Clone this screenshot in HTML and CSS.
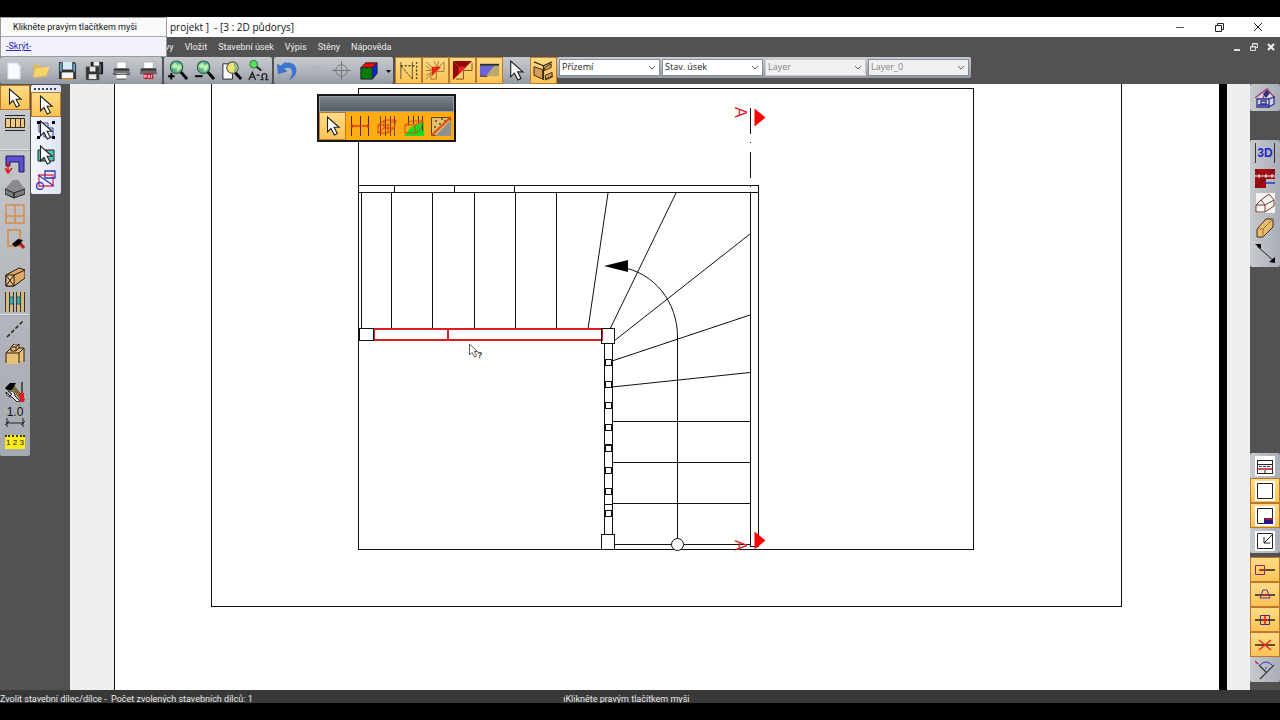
FILE: index.html
```html
<!DOCTYPE html>
<html lang="cs">
<head>
<meta charset="utf-8">
<title>projekt - 2D půdorys</title>
<link rel="stylesheet" href="styles.css">
</head>
<body>
<svg class="defs" aria-hidden="true">
  <symbol id="cursor" viewBox="0 0 20 20"><path d="M4.500 1v15l3.500-3.500 3.300 6.500 3-1.500-3.200-6.200h5z" fill="#fff" stroke="#222" stroke-width="1.100"/></symbol>
  <symbol id="globe" viewBox="0 0 22 22"><path d="M14 12l7 8" stroke="#000" stroke-width="3"/><circle cx="10" cy="7.500" r="6.500" fill="#68c58d" stroke="#31594c" stroke-width="1.200"/><path d="M5 6l4-3 2 3 3-2 1 4-4 4-1-4-3 1z" fill="#c0efb0"/><path d="M6 9l3 4M10 2l3 2" stroke="#3a8aa0"/></symbol>
</svg>
<div class="app">
  <header class="titlebar">
    <span class="title">projekt ]&nbsp; - [3 : 2D půdorys]</span>
    <div class="winbtns">
      <button aria-label="Minimalizovat"><svg viewBox="0 0 10 10"><path d="M1 5.500h8" stroke="#555"/></svg></button>
      <button aria-label="Obnovit"><svg viewBox="0 0 10 10"><path d="M1.500 3.500h6v6h-6zM3.500 3.500v-2h6v6h-2" fill="none" stroke="#222"/></svg></button>
      <button aria-label="Zavřít"><svg viewBox="0 0 10 10"><path d="M1 1l8 8M9 1L1 9" stroke="#222"/></svg></button>
    </div>
  </header>
  <nav class="menubar">
    <button>vy</button><button>Vložit</button><button>Stavební úsek</button><button>Výpis</button><button>Stěny</button><button>Nápověda</button>
    <div class="docbtns">
      <button aria-label="Minimalizovat okno"><svg viewBox="0 0 10 10"><path d="M2 8h6" stroke="#ddd" stroke-width="2"/></svg></button>
      <button aria-label="Obnovit okno"><svg viewBox="0 0 10 10"><path d="M1.500 4.500h5v4h-5zM3.500 4V1.500h5v4H7M1 5h6M3 2h6" fill="none" stroke="#ddd"/></svg></button>
      <button aria-label="Zavřít okno"><svg viewBox="0 0 10 10"><path d="M2 2l6 6M8 2L2 8" stroke="#eee" stroke-width="2"/></svg></button>
    </div>
  </nav>
  <div class="toolbar">
    <div class="group">
      <button aria-label="Nový"><svg viewBox="0 0 22 22"><path d="M5 3h10l3 3v14H5z" fill="#f8fbff" stroke="#cbd4e0"/><path d="M15 3v3h3" fill="#ddd"/></svg></button>
      <button aria-label="Otevřít"><svg viewBox="0 0 22 22"><path d="M3 5h6l2 2h7v10l-13 2z" fill="#d9bb5c"/><path d="M3 18l3-9 15-2-4 9z" fill="#f6d36b"/></svg></button>
      <button aria-label="Uložit"><svg viewBox="0 0 22 22"><path d="M2 2h16l2 2v16H2z" fill="#333"/><path d="M6 2h10v8H6z" fill="#d5eaf5"/><path d="M5 13h12v6H5z" fill="#f7f7f7"/><path d="M4 3v9M18 4v8" stroke="#5da4d0" stroke-width="2"/><path d="M5 20h12" stroke="#d09050" stroke-width="2"/></svg></button>
      <button aria-label="Uložit vše"><svg viewBox="0 0 22 22"><path d="M7 2h13v13H7z" fill="#222"/><path d="M10 2h6v4h-6z" fill="#eee"/><path d="M2 7h14v14H2z" fill="#333" stroke="#888" stroke-width=".6"/><path d="M6 7h6v5H6zM5 15h8v5H5z" fill="#e8e8e8"/><path d="M17 4v9" stroke="#789"/></svg></button>
      <button aria-label="Tisk"><svg viewBox="0 0 22 22"><path d="M6 2h10v7H6z" fill="#fff" stroke="#aaa"/><path d="M3 9h16l1 6H2z" fill="#777"/><path d="M3 10h16" stroke="#333" stroke-width="2"/><path d="M6 14h10v6H6z" fill="#fff"/><path d="M2 15h18M6 20h10" stroke="#444"/></svg></button>
      <button aria-label="Tisk do PDF"><svg viewBox="0 0 22 22"><path d="M6 2h10v7H6z" fill="#fff" stroke="#aaa"/><path d="M3 9h16l1 6H2z" fill="#666"/><path d="M3 10h16" stroke="#333" stroke-width="2"/><path d="M6 14h10v6H6z" fill="#c6192c"/><path d="M7 19v-3h2v1.500H7M11 19v-3h1v3M14 19v-3h1" fill="none" stroke="#fff" stroke-width=".7"/></svg></button>
    </div>
    <div class="group">
      <button aria-label="Přiblížit"><svg viewBox="0 0 22 22"><use href="#globe"/><path d="M1 17h7M4.500 13.500v7" stroke="#000" stroke-width="2"/></svg></button>
      <button aria-label="Oddálit"><svg viewBox="0 0 22 22"><use href="#globe"/><path d="M1 17h8" stroke="#000" stroke-width="2"/></svg></button>
      <button aria-label="Zobrazit stránku"><svg viewBox="0 0 22 22"><path d="M2 4h10v16H2z" fill="#fff" stroke="#222"/><path d="M14 12l7 8" stroke="#000" stroke-width="3"/><circle cx="12" cy="8" r="6" fill="#f0e46c" stroke="#555" stroke-width="1.200"/><path d="M14 4q3 4 0 8" fill="none" stroke="#65bda6" stroke-width="2"/></svg></button>
      <button aria-label="Hledat text"><svg viewBox="0 0 22 22"><circle cx="6" cy="4.500" r="4" fill="#55e35f" stroke="#287b36"/><path d="M9 7l5 4" stroke="#222" stroke-width="2"/><path d="M1 21l3.500-8L8 21M2 18h5M9 16h3M13 20.500h2.500v-1c-4-7 7-7 3.500 0v1h2.500" fill="none" stroke="#222" stroke-width="1.400"/></svg></button>
    </div>
    <div class="group">
      <button aria-label="Zpět"><svg viewBox="0 0 22 22"><path d="M0 4l1 11 10-3-3.500-3c9-4 11 5 5 12 12-5 10-21-5-18L4 6z" fill="#3974cf"/></svg></button>
      <button aria-label="Znovu" disabled><svg viewBox="0 0 22 22"><path d="M4 14q4-9 10-5V6l4 5-4 4v-3q-5-3-8 4z" fill="none" stroke="#a9acb4"/></svg></button>
      <button aria-label="Střed"><svg viewBox="0 0 22 22"><circle cx="11" cy="11" r="6" fill="none" stroke="#777"/><path d="M11 1v20M1 11h20" stroke="#777"/></svg></button>
      <button aria-label="3D pohled"><svg viewBox="0 0 22 22"><path d="M3 8l5-5h12l-5 5z" fill="#f00"/><path d="M3 8h12v12H3z" fill="#087b0a"/><path d="M15 8l5-5v11l-5 6z" fill="#0028dc"/><path d="M3 8l5-5h12v11l-5 6H3zM3 8h12v12M15 8l5-5" fill="none" stroke="#222"/></svg></button>
      <button class="caret" aria-label="Další pohledy"><svg viewBox="0 0 6 6"><path d="M1 2h5L3.500 5z"/></svg></button>
    </div>
    <div class="group">
      <button class="on" aria-label="Čáry"><svg viewBox="0 0 22 22"><path d="M3 2v18M15 2v18" stroke="#553" /><path d="M19.500 2v18M3 6h16" stroke="#443" stroke-width="1.500" stroke-dasharray="2 2"/><path d="M3 6l12 14" stroke="#443" stroke-dasharray="3 1"/></svg></button>
      <button class="on" aria-label="Šrafy"><svg viewBox="0 0 22 22"><path d="M1 2l8 7M1 6l6 5M1 11h6M1 16l6-3M9 1l4 7M14 1l-1 6M1 20L20 2M20 2v10h-8v8H6v-5" fill="none" stroke="#a07a3a"/><path d="M7 7h10L7 17z" fill="#e52617"/></svg></button>
      <button class="on" aria-label="Střecha"><svg viewBox="0 0 22 22"><path d="M1 1h20L1 21z" fill="#920a0a"/><path d="M7 7h8l-8 8z" fill="#f32020"/><path d="M1 1l6 6M21 3v8h-9v9H4" fill="none" stroke="#7a4d24"/></svg></button>
      <button class="on" aria-label="Plocha"><svg viewBox="0 0 22 22"><path d="M1 5h20v12H1z" fill="#b8a870"/><path d="M1 6h15L7 17H1z" fill="#6b65d8"/><path d="M1 5h20" stroke="#233" stroke-width="2"/><path d="M1 17h8" stroke="#233"/></svg></button>
      <button aria-label="Výběr"><svg><use href="#cursor"/></svg></button>
      <button class="on" aria-label="Prvky"><svg viewBox="0 0 22 22"><path d="M1 7l9 3v10l-9-4z" fill="#d49c59" stroke="#382b18"/><path d="M1 2l10 4 9-4M11 6v15M13 21l8-4" fill="none" stroke="#382b18" stroke-width="1.300"/><path d="M12 8l7-4v4l-7 3zM13 16l7-3v4l-7 3z" fill="#d49c59" stroke="#382b18"/></svg></button>
    </div>
    <div class="selects">
      <select aria-label="Podlaží"><option>Přízemí</option></select>
      <select aria-label="Úsek"><option>Stav. úsek</option></select>
      <select aria-label="Layer" class="off" disabled><option>Layer</option></select>
      <select aria-label="Číslo layeru" class="off framed" disabled><option>Layer_0</option></select>
    </div>
  </div>
  <main class="work">
    <aside class="leftdock">
      <div class="palette">
        <button class="on" aria-label="Zvolit"><svg><use href="#cursor"/></svg></button>
        <button class="end" aria-label="Schody"><svg viewBox="0 0 20 20"><path d="M0 5h20v10H0z" fill="#efc984"/><path d="M0 2.500h20M0 17.500h20" stroke="#222"/><path d="M.500 5.500h19v9H.5zM5.500 5v10M10.500 5v10M15.500 5v10" fill="none" stroke="#3b2b12"/></svg></button>
        <hr>
        <button aria-label="Stěna"><svg viewBox="0 0 20 20"><path d="M1 2h18v16h-5V8H5v4H1z" fill="#5950d2" stroke="#211b55"/><path d="M3 8v10M0 14l3 5 4-5" fill="none" stroke="#e0161b" stroke-width="1.500"/></svg></button>
        <button aria-label="Strop"><svg viewBox="0 0 20 20"><path d="M0 10l8-9h5l7 9-11 4z" fill="#8b8b8b"/><path d="M0 10l9 4v5l-9-4zM9 14l11-4v5L9 19z" fill="#7c7c7c" stroke="#222"/></svg></button>
        <button aria-label="Okno"><svg viewBox="0 0 20 20"><path d="M1 1h18v18H1zM10 1v18M1 12h18" fill="none" stroke="#dc8b45" stroke-width="1.500"/></svg></button>
        <button aria-label="Upravit okno" class="pad"><svg viewBox="0 0 20 20"><path d="M3 1h12v16H3z" fill="none" stroke="#df873b" stroke-width="1.500"/><path d="M14 13l5 6" stroke="#b81c22" stroke-width="3"/><path d="M7 15l6-5 5 1-4 5-4 2z"/></svg></button>
        <button aria-label="Trám"><svg viewBox="0 0 20 20"><path d="M1 8l13-7 6 2v8L9 19H1z" fill="#dda866" stroke="#27180b"/><path d="M1 8h8v11H1z" fill="#edc385" stroke="#27180b"/><path d="M1 8l8 11M9 8L1 19M9 8l11-5" fill="none" stroke="#27180b"/></svg></button>
        <button aria-label="Sloupky"><svg viewBox="0 0 20 20"><path d="M2 0v20M7 0v20M13 0v20M18 0v20" stroke="#e0b872" stroke-width="3"/><path d="M.500 0v20M4.500 0v20M8.500 0v20M11.500 0v20M15.500 0v20M19.500 0v20" stroke="#333"/><path d="M5 5h3v7H5zM12 5h3v7h-3z" fill="#37c4ae" stroke="#366"/></svg></button>
        <hr>
        <button aria-label="Linie"><svg viewBox="0 0 20 20"><path d="M2 18L18 2" stroke="#222" stroke-width="1.500" stroke-dasharray="4 2"/></svg></button>
        <button aria-label="Sloup" class="pad"><svg viewBox="0 0 20 20"><path d="M1 9l5-5h13v15M1 19V9h13l5-5M14 9v10" fill="#e9c078"/><path d="M1 9h13v11H1z" fill="#e9c078"/><path d="M1 19V9l5-5h13v14M1 9h13l5-5M14 9v10" fill="none" stroke="#2c2115"/><path d="M6 3l3-3h5v4l-3 3H6zM6 3h5l3-3M11 3v4" fill="#e5b873" stroke="#2c2115"/></svg></button>
        <button aria-label="Nástroje"><svg viewBox="0 0 20 20"><path d="M8 5l11 14" stroke="#786d26" stroke-width="4"/><path d="M0 6l5-5h6l-4 7H2z"/><path d="M17 0v12" stroke="#333" stroke-width="1.500"/><path d="M14 11h5v9h-4z" fill="#e51c22"/><path d="M1 10l4 4 2-2-4-3q7-1 7 5l5 5-3 1-5-5q-6 0-6-5" fill="#e1e1e1" stroke="#222"/></svg></button>
        <button aria-label="Kóta" class="dim"><span>1.0</span><svg viewBox="0 0 20 9"><path d="M1 5h18M2 0v9M18 0v9M0 7l4-4M16 7l4-4" stroke="#222"/></svg></button>
        <button aria-label="Měření" class="ruler"><span>1 2 3</span></button>
      </div>
      <div class="palette sub">
        <i class="grip"></i>
        <button class="on" aria-label="Ukazatel"><svg><use href="#cursor"/></svg></button>
        <button aria-label="Výběr rámem"><svg viewBox="0 0 20 20"><path d="M3 3h9v9H3zM8 8h9v9H8z" fill="none" stroke="#37379a"/><path d="M1 1h3v3H1zM16 1h3v3h-3zM1 16h3v3H1zM16 16h3v3h-3z"/><use href="#cursor"/></svg></button>
        <button aria-label="Výběr plochy"><svg viewBox="0 0 20 20"><path d="M2 5h16v11H2z" fill="#4fc4b0" stroke="#222"/><use href="#cursor"/></svg></button>
        <button aria-label="Výběr tvarů"><svg viewBox="0 0 20 20"><path d="M3 5h14v11H3z" fill="none" stroke="#ed3449" stroke-width="1.300"/><path d="M9 1h10v7H9zM2 5l16 11" fill="none" stroke="#3434bd" stroke-width="1.300"/><circle cx="4" cy="16" r="3.500" fill="none" stroke="#3434bd" stroke-width="1.300"/></svg></button>
      </div>
    </aside>
    <section class="canvas">
      <svg viewBox="70 84 1180 606" role="img" aria-label="Půdorys schodiště">
        <rect x="70" y="84" width="1180" height="606" fill="#efefef"/>
        <rect x="115" y="84" width="1104" height="606" fill="#fff"/>
        <rect x="1219" y="84" width="8" height="606"/>
        <g fill="none" stroke="#111" shape-rendering="crispEdges">
          <path d="M114.500 84v606M211.500 84v522.500h910V84M358.500 88.500h615v461h-615z"/>
          <path d="M358.500 185.500h400v361h-8V192.500h-392zM394.500 185v8M454.500 185v8M514.500 185v8M750.500 192.500h8"/>
          <path d="M361.500 193v136M391.500 193v136M432.500 193v136M474.500 193v136M515.500 193v136M556.500 193v136"/>
          <path d="M612 421.500h138M612 462.500h138M612 503.500h138M615 544.500h135"/>
          <path d="M604.500 343v192M612.500 343v192M605 444.500h7M605 504.500h7"/>
          <path d="M750.500 108v26M750.500 142v1M750.500 152v26M750.500 186v1"/>
          <path d="M605.500 359.500h6v6h-6zM605.500 381.500h6v6h-6zM605.500 402.500h6v6h-6zM605.500 424.500h6v6h-6zM605.500 445.500h6v6h-6zM605.500 467.500h6v6h-6zM605.500 488.500h6v6h-6zM605.500 510.500h6v6h-6z"/>
        </g>
        <g fill="none" stroke="#111">
          <path d="M608 193L588 329M676 193L610 329M750 234L614 341M750 315L612 361M750 372.500L612 387M677.500 539V338C678 302 654 272 620 267"/>
          <circle cx="677.500" cy="544.500" r="6" fill="#fff"/>
        </g>
        <path d="M604 266l24-6v12z"/>
        <path d="M374 329h228v11h-228zM448 329v12" fill="none" stroke="#dc1b25" stroke-width="2" shape-rendering="crispEdges"/>
        <path d="M359.500 328.500h14v12h-14zM601.500 328.500h13v15h-13zM601.500 534.500h13v15h-13z" fill="#fff" stroke="#111" shape-rendering="crispEdges"/>
        <path d="M602 329v12" stroke="#dc1b25" stroke-width="1" shape-rendering="crispEdges"/>
        <path d="M754.500 108.500l11 9-11 9zM754.500 531.500l11 9-11 9z" fill="#f00"/>
        <text class="mark" transform="translate(735 107) rotate(90)">A</text>
        <text class="mark" transform="translate(735 540) rotate(90)">A</text>
        <path d="M469.500 344v11l2.500-2.500 2.500 4.500 2-1-2-4.500h3z" fill="#fff" stroke="#333" stroke-width=".8"/>
        <text class="help" x="477" y="358">?</text>
      </svg>
      <div class="floating">
        <div class="floathead"></div>
        <div class="floatrow">
          <button class="on" aria-label="Zvolit dílec"><svg><use href="#cursor"/></svg></button>
          <button aria-label="Rozteč"><svg viewBox="0 0 20 20"><path d="M1.500 0v20M10.500 0v20M18.500 0v20" stroke="#44300f"/><path d="M1 10h18" stroke="#e13a14" stroke-width="1.500"/><path d="M0 10l3-2v4zM20 10l-3-2v4z" fill="#e13a14"/></svg></button>
          <button aria-label="Kvádr"><svg viewBox="0 0 20 20"><path d="M3.500 0v20M8.500 0v20M13.500 0v20M17.500 0v20" stroke="#634711"/><path d="M1 9l7-5h11l-2 8-6 5H1zM1 9h10l8-5M11 9v8M7 4v8l-6 5M7 12h10" fill="none" stroke="#e13a14"/></svg></button>
          <button aria-label="Výplň"><svg viewBox="0 0 20 20"><path d="M0 20l7-9 13-5v14z" fill="#18dc23"/><path d="M4.500 0v9M9.500 0v8M14.500 0v7M18.500 0v15" stroke="#443a10"/><path d="M1 9l6-4h12l-2 8-5 4H1zM1 9h10l8-4M11 9v8" fill="none" stroke="#d34b14"/></svg></button>
          <button aria-label="Materiál"><svg viewBox="0 0 20 20"><path d="M.500 1.500h19v18H.5z" fill="#e2bd6d" stroke="#57421b"/><path d="M20 4v16H4z" fill="#8e9190"/><path d="M4 5h2M10 3h2M8 8h2M3 11h2M13 5h2" stroke="#6a4712" stroke-width="1.500"/><path d="M0 20L20 1" stroke="#de4e13" stroke-width="2"/></svg></button>
        </div>
      </div>
    </section>
    <aside class="rightdock">
      <div class="palette">
        <button aria-label="Model domu"><svg viewBox="0 0 20 20"><path d="M1 10L12 1l8 9v6l-5 3H3v-8" fill="#d8d3e4"/><path d="M0 10L12 1l8 9M12 1L8 10" fill="none" stroke="#a63768" stroke-width="1.300"/><path d="M8 6l4-4 3 3-4 5z" fill="#35307c"/><path d="M2 11h12v8H2zM14 11l5-2v7l-5 3M6 13h5v3H6zM3 17h11" fill="none" stroke="#29318c" stroke-width="1.300"/></svg></button>
      </div>
      <div class="palette views">
        <button aria-label="3D" class="threed"><span>3D</span></button>
        <button aria-label="Řez střechou"><svg viewBox="0 0 20 20"><path d="M0 1h20v10H11v9H0z" fill="#a10d13"/><path d="M0 1l10 10L20 1M0 20l10-9" fill="none" stroke="#5c0808"/><path d="M0 8h20M4 6v4M11 6v4M17 6v4" stroke="#fff"/><path d="M10 15h10" stroke="#2836c9" stroke-width="1.500"/></svg></button>
        <button aria-label="Dům"><svg viewBox="0 0 20 20"><path d="M1 0h19v20H1z" fill="#f6f4f2"/><path d="M1 12l5-5 4 5v7H1zM6 7l8-6 5 6-9 5M19 7v6l-9 6M1 12h9" fill="none" stroke="#763b31"/></svg></button>
        <button aria-label="Deska"><svg viewBox="0 0 20 20"><path d="M2 11L11 1h7v8L8 19H2z" fill="#e9bd70" stroke="#3d2d17"/><path d="M2 11h6L18 1M8 11v8" fill="none" stroke="#9d7431"/></svg></button>
        <button aria-label="Úsečka"><svg viewBox="0 0 20 20"><path d="M2 3l17 15" stroke="#222"/><path d="M0 1h6v5zM20 20v-6l-6 5z"/></svg></button>
      </div>
      <div class="palette layouts">
        <button aria-label="Rozpis"><svg viewBox="0 0 20 20"><path d="M0 0h20v20H0z" fill="#fff"/><path d="M2 4.500h16M2 8.500h16M2 17.500h16M2.500 4v14M17.500 4v14M10 14v4" stroke="#222"/><path d="M2 13h16" stroke="#b41824" stroke-width="1.500"/><path d="M4 10.500h12" stroke="#2836a0" stroke-dasharray="3 1"/></svg></button>
        <button class="on" aria-label="List"><svg viewBox="0 0 20 20"><path d="M0 0h20v20H0z" fill="#fff"/><path d="M2.500 2.500h15v15h-15z" fill="none" stroke="#222"/></svg></button>
        <button class="on" aria-label="Razítko"><svg viewBox="0 0 20 20"><path d="M0 0h20v20H0z" fill="#fff"/><path d="M2.500 2.500h15v15h-15z" fill="none" stroke="#222"/><path d="M9 12h9v6H9z" fill="#261784"/><path d="M10 12h8v2h-8z" fill="#a4163d"/></svg></button>
        <button aria-label="Přizpůsobit"><svg viewBox="0 0 20 20"><path d="M0 0h20v20H0z" fill="#fff"/><path d="M2.500 2.500h15v15h-15zM17 4l-8 8M9 6v6h6" fill="none" stroke="#222"/></svg></button>
      </div>
      <div class="palette snaps">
        <button class="on" aria-label="Koncový bod"><svg viewBox="0 0 20 20"><path d="M5 10h15" stroke="#222" stroke-width="1.500"/><path d="M.500 5.500h9v9H.5z" fill="none" stroke="#772e6f"/><path d="M4 10h6" stroke="#db281c" stroke-width="1.500"/></svg></button>
        <button class="on" aria-label="Střed úsečky"><svg viewBox="0 0 20 20"><path d="M0 10h20" stroke="#222" stroke-width="1.500"/><path d="M5 13l3-8h4l3 8z" fill="none" stroke="#54379a"/><path d="M7 10h6" stroke="#db281c" stroke-width="1.500"/></svg></button>
        <button class="on" aria-label="Průsečík"><svg viewBox="0 0 20 20"><path d="M0 10h20" stroke="#222" stroke-width="1.500"/><path d="M5.500 5.500h9v9h-9z" fill="none" stroke="#442d76"/><path d="M10 6v8M7 10h6" stroke="#e51d18" stroke-width="1.500"/></svg></button>
        <button class="on" aria-label="Bod na čáře"><svg viewBox="0 0 20 20"><path d="M0 10h20" stroke="#222" stroke-width="1.500"/><path d="M4 5l12 10M16 5L4 15" stroke="#e52a18" stroke-width="1.500"/></svg></button>
        <button aria-label="Kolmice"><svg viewBox="0 0 20 20"><path d="M5 19L19 5M4 5l7 7" stroke="#333" stroke-width="1.200"/><path d="M0 1l3 3" stroke="#bd2939" stroke-width="1.500"/><path d="M5 5q6-6 12 0" fill="none" stroke="#3337ce"/><path d="M11 7v2" stroke="#3337ce"/></svg></button>
      </div>
    </aside>
  </main>
  <footer class="status">
    <span class="state">Zvolit stavební dílec/dílce -&nbsp; Počet zvolených stavebních dílců: 1</span>
    <span>ıKlikněte pravým tlačítkem myši</span>
  </footer>
  <div class="hint">
    <p>Klikněte pravým tlačítkem myši</p>
    <div><a href="#">-Skrýt-</a></div>
  </div>
</div>
</body>
</html>
```
FILE: styles.css
```css
* { box-sizing: border-box; }
body {
  margin: 0;
  background: #000;
  font: 9px/12px Roboto, sans-serif;
  color: #111;
}
button { border: 0; padding: 0; background: none; font: inherit; color: inherit; }
svg { display: block; }
.defs { position: absolute; width: 0; height: 0; }
.app {
  position: relative;
  display: flex;
  flex-direction: column;
  min-height: 100vh;
  padding: 17px 0;
}
.titlebar {
  display: flex;
  justify-content: space-between;
  align-items: center;
  height: 20px;
  padding: 0 17px 0 170px;
  background: #fff;
}
.title { font: 10px/16px "Open Sans", sans-serif; white-space: nowrap; }
.winbtns { display: flex; gap: 29px; }
.winbtns svg, .docbtns svg { width: 10px; height: 10px; }
.menubar {
  display: flex;
  align-items: center;
  gap: 11px;
  height: 20px;
  padding: 0 4px 0 165px;
  background: #525252;
  color: #ececec;
}
.docbtns { display: flex; gap: 7px; margin-left: auto; }
.toolbar {
  display: flex;
  gap: 2px;
  height: 27px;
  background: #525252;
}
.group {
  display: flex;
  border-radius: 2px;
  background: linear-gradient(#c6c9cf, #aeb2ba 60%, #9298a2);
}
.group button {
  display: grid;
  place-items: center;
  width: 27px;
  height: 27px;
}
.group svg { width: 21px; height: 21px; }
.group .caret { width: 11px; }
.group .caret svg { width: 6px; height: 6px; }
.group .on, .palette .on, .floatrow .on {
  border: 1px solid #bd782e;
  background: linear-gradient(#ffdc86, #fcc355);
}
.selects {
  display: flex;
  gap: 2px;
  height: 21px;
  margin-left: -2px;
  padding: 2px;
  border-radius: 2px;
  background: linear-gradient(#c9ccd2, #9499a3);
}
.selects select {
  appearance: none;
  width: 101px;
  height: 17px;
  padding: 0 16px 1px 2px;
  border: 1px solid #83919b;
  border-radius: 0;
  font: 9px/12px "Open Sans", sans-serif;
  color: #222;
  background: #fff url("data:image/svg+xml,%3Csvg xmlns='http://www.w3.org/2000/svg' width='8' height='6'%3E%3Cpath d='M1 1l3 3 3-3' fill='none' stroke='%23666'/%3E%3C/svg%3E") no-repeat right 3px center;
  opacity: 1;
}
.selects .off { color: #858585; border-color: #c9c9c9; background-color: #f0f0f0; }
.selects .framed { border-color: #81909a; }
.work { display: flex; flex: 1; background: #525252; }
.leftdock { display: flex; gap: 1px; align-items: flex-start; width: 70px; padding-top: 1px; }
.palette {
  display: flex;
  flex-direction: column;
  width: 30px;
  border-radius: 2px;
  background: linear-gradient(90deg, #c7cace, #a9aeb7);
}
.palette button {
  display: grid;
  place-items: center;
  width: 100%;
  height: 25px;
}
.palette svg { width: 20px; height: 20px; }
.leftdock .palette { padding-bottom: 2px; background: linear-gradient(#c9cbce, #a5a9b1); }
.leftdock .sub { background: linear-gradient(90deg, #f3f6fd, #dce4f4); }
.palette hr { width: 100%; margin: 0; border: 0; border-top: 1px solid #e1e3e6; border-bottom: 1px solid #a2a6ad; }
.palette .end { margin-bottom: 14px; }
.palette .pad { margin-bottom: 13px; }
.grip { height: 7px; margin: 0 3px; border-top: 3px solid transparent; background: repeating-linear-gradient(90deg, #344567 0 2px, transparent 2px 4px) 0 0 / 100% 2px no-repeat; }
.palette .dim { align-content: center; line-height: 10px; }
.palette .dim svg { height: 9px; }
.dim span { font: 12px/11px "Liberation Sans", sans-serif; }
.ruler span {
  width: 20px;
  border-top: 2px dotted #333;
  background: #ffed16;
  font: 8px/12px "Liberation Sans", sans-serif;
  text-align: center;
  white-space: nowrap;
}
.canvas { position: relative; flex: 1; background: #efefef; }
.canvas > svg { width: 100%; }
.mark { font: 16px "Liberation Sans", sans-serif; fill: #e41c24; }
.help { font: bold 9px "Liberation Sans", sans-serif; fill: #333; }
.floating {
  position: absolute;
  left: 247px;
  top: 10px;
  border: 2px solid #171717;
  background: #ffab12;
}
.floathead { height: 16px; border: 1px solid #9a9ea5; background: linear-gradient(#7a8089, #565c65); }
.floatrow { display: flex; }
.floatrow button { display: grid; place-items: center; width: 27px; height: 28px; }
.floatrow svg { width: 20px; height: 20px; }
.rightdock { display: flex; flex-direction: column; width: 30px; padding-bottom: 8px; }
.rightdock .palette:first-child { padding: 1px 0; }
.views { margin-top: 29px; padding-bottom: 2px; }
.layouts { margin-top: auto; }
.snaps { margin-top: 4px; }
.threed span { padding: 3px 1px; border: solid #333; border-width: 0 1px; font: bold 12px/14px "Liberation Sans", sans-serif; color: #1e27c7; }
.status {
  display: flex;
  height: 13px;
  padding-top: 3px;
  overflow: hidden;
  background: #383838;
  color: #e9e9e9;
  white-space: nowrap;
}
.state { width: 44%; }
.hint {
  position: absolute;
  left: 0;
  top: 17px;
  width: 167px;
  border: 1px solid #999;
  background: #fff;
}
.hint p { margin: 0; padding: 3px 12px; border-bottom: 1px solid #aaa; white-space: nowrap; background: #fafafa; }
.hint div { padding: 3px 5px 4px; background: #f1f2fc; }
.hint a { color: #2925c4; }
```
